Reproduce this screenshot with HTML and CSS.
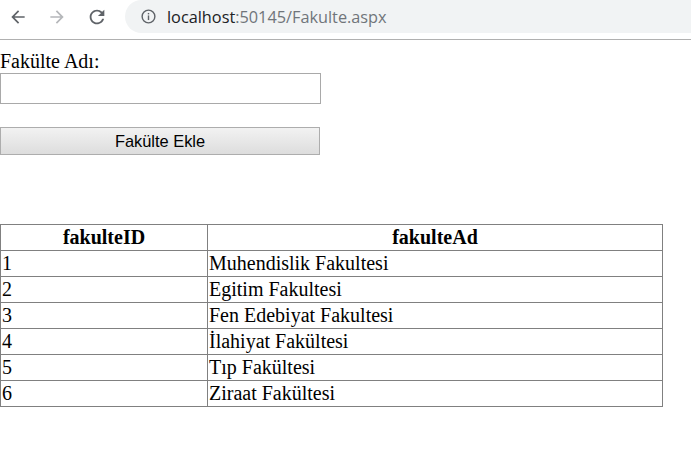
FILE: index.html
```html
<!DOCTYPE html>
<html>
<head>
<meta charset="utf-8">
<link rel="stylesheet" href="styles.css">
</head>
<body>
<div class="toolbar">
  <div class="nav">
    <svg class="navicon" width="20" height="20" viewBox="0 0 24 24"><path d="M20 11H7.83l5.59-5.59L12 4l-8 8 8 8 1.41-1.41L7.83 13H20v-2z" fill="#5f6368"/></svg>
    <svg class="navicon" width="20" height="20" viewBox="0 0 24 24"><path d="M12 4l-1.41 1.41L16.17 11H4v2h12.17l-5.58 5.59L12 20l8-8z" fill="#b5b7ba"/></svg>
    <svg class="navicon" width="22" height="22" viewBox="0 0 24 24"><path d="M17.65 6.35A7.958 7.958 0 0 0 12 4c-4.42 0-7.99 3.580-7.99 8s3.57 8 7.99 8c3.73 0 6.84-2.55 7.73-6h-2.08A5.99 5.99 0 0 1 12 18c-3.31 0-6-2.690-6-6s2.69-6 6-6c1.66 0 3.14.69 4.22 1.78L13 11h7V4l-2.35 2.35z" fill="#5f6368"/></svg>
  </div>
  <div class="omnibox">
    <svg class="info" width="17" height="17" viewBox="0 0 24 24"><circle cx="12" cy="12" r="9" fill="none" stroke="#5f6368" stroke-width="2"/><rect x="11" y="10.5" width="2" height="6.5" fill="#5f6368"/><rect x="11" y="7" width="2" height="2" fill="#5f6368"/></svg>
    <span class="host">localhost</span><span class="path">:50145/Fakulte.aspx</span>
  </div>
</div>
<form class="page">
  <div class="label">Fakülte Adı:</div>
  <input class="field" type="text">
  <button class="btn" type="button">Fakülte Ekle</button>
  <table class="grid">
    <tr><th class="c1">fakulteID</th><th>fakulteAd</th></tr>
    <tr><td>1</td><td>Muhendislik Fakultesi</td></tr>
    <tr><td>2</td><td>Egitim Fakultesi</td></tr>
    <tr><td>3</td><td>Fen Edebiyat Fakultesi</td></tr>
    <tr><td>4</td><td>İlahiyat Fakültesi</td></tr>
    <tr><td>5</td><td>Tıp Fakültesi</td></tr>
    <tr><td>6</td><td>Ziraat Fakültesi</td></tr>
  </table>
</form>
</body>
</html>
```

FILE: styles.css
```css
html, body {
  margin: 0;
  padding: 0;
  background: #fff;
}
.toolbar {
  height: 39px;
  border-bottom: 1px solid #b0b0b0;
  display: flex;
  align-items: flex-start;
  background: #fff;
}
.nav {
  display: flex;
  align-items: center;
  height: 33px;
  padding-left: 8px;
  gap: 19px;
  width: 116px;
  box-sizing: border-box;
}
.navicon {
  display: block;
}
.omnibox {
  flex: 1;
  height: 33px;
  margin-left: 9px;
  background: #f1f3f4;
  border-radius: 0 0 0 17px;
  border-top-left-radius: 17px;
  display: flex;
  align-items: center;
  padding-left: 15px;
  font-family: "Open Sans", "Noto Sans", sans-serif;
  font-size: 16.3px;
}
.info {
  margin-right: 10px;
}
.host {
  color: #202124;
}
.path {
  color: #70757a;
}
.page {
  margin: 0;
  padding-top: 10px;
  font-family: "Liberation Serif", "Times New Roman", serif;
  font-size: 20px;
  color: #000;
}
.label {
  line-height: 23px;
}
.field {
  display: block;
  box-sizing: border-box;
  width: 321px;
  height: 31px;
  margin: 0;
  border: 1px solid #a9a9a9;
  padding: 2px 4px;
  font-family: "Liberation Sans", Arial, sans-serif;
  font-size: 15px;
}
.btn {
  display: block;
  box-sizing: border-box;
  width: 320px;
  height: 28px;
  margin: 23px 0 0 0;
  border: 1px solid #adadad;
  border-radius: 0;
  background: linear-gradient(#f2f2f2, #dddddd);
  font-family: "Liberation Sans", Arial, sans-serif;
  font-size: 16.4px;
  color: #000;
  padding: 0;
}
.grid {
  margin-top: 69px;
  border-collapse: collapse;
  width: 663px;
  font-family: "Liberation Serif", "Times New Roman", serif;
  font-size: 20px;
}
.grid th, .grid td {
  border: 1px solid #808080;
  height: 25px;
  padding: 0 1px;
  box-sizing: content-box;
  line-height: 23px;
}
.grid td {
  text-align: left;
}
.grid th {
  font-weight: bold;
  text-align: center;
}
.grid .c1 {
  width: 204px;
}
```
